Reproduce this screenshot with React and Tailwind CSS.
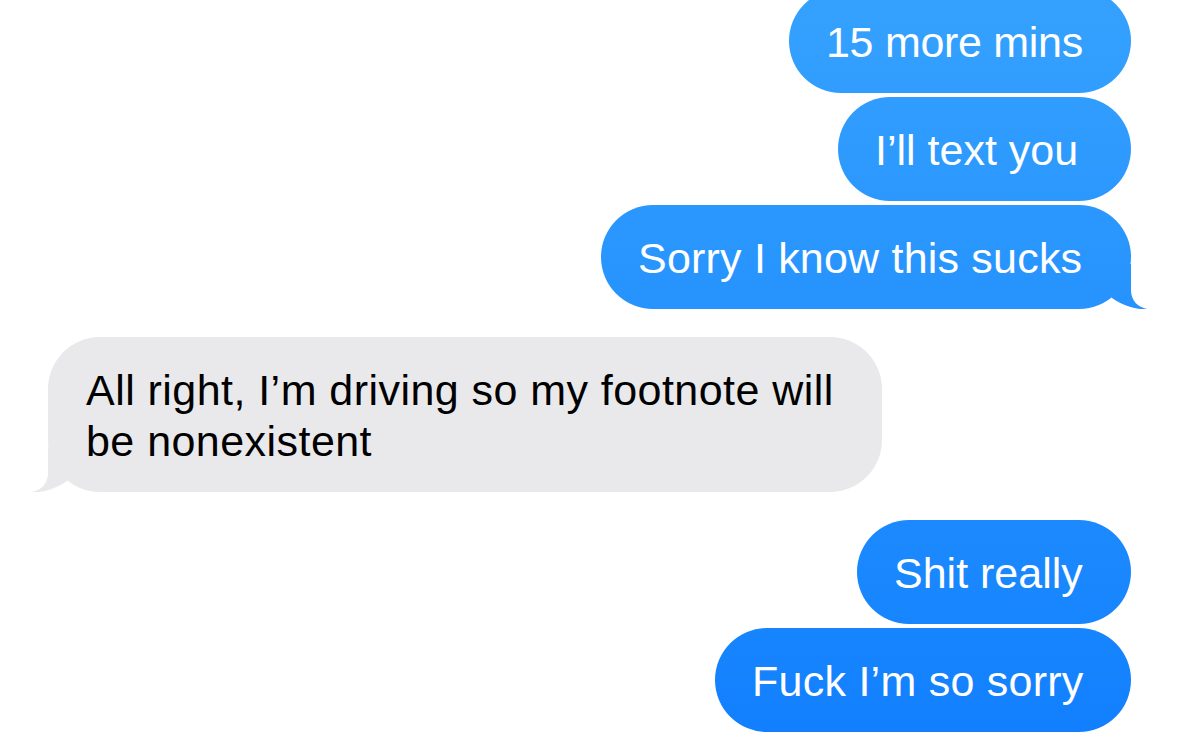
const sent = 'bg-[linear-gradient(180deg,#35a1fe_0%,#1280fe_100%)] bg-fixed text-white';

// tail sits with its top at page y 264, so the gradient is shifted to line up with the fixed one
function BlueTail() {
  return (
    <svg className="absolute bottom-0 right-[-16px]" width="50" height="45" viewBox="0 0 50 45">
      <defs>
        <linearGradient id="tailBlue" gradientUnits="userSpaceOnUse" x1="0" y1="-264" x2="0" y2="469">
          <stop offset="0" stopColor="#35a1fe" />
          <stop offset="1" stopColor="#1280fe" />
        </linearGradient>
      </defs>
      <path d="M0 0H34V26C34 37 41 43 50 45C40 46 26 42 15 34L0 0Z" fill="url(#tailBlue)" />
    </svg>
  );
}

function GrayTail() {
  return (
    <svg className="absolute bottom-0 left-[-16px]" width="50" height="45" viewBox="0 0 50 45">
      <path d="M50 0H16V26C16 37 9 43 0 45C10 46 24 42 35 34L50 0Z" fill="#e9e9eb" />
    </svg>
  );
}

function Sent({ text, width, tail, className = '' }) {
  return (
    <div
      className={`relative h-[104px] rounded-[52px] pl-[37px] pt-[28px] pb-[25px] whitespace-nowrap ${sent} ${className}`}
      style={{ width }}
    >
      {text}
      {tail && <BlueTail />}
    </div>
  );
}

export default function App() {
  return (
    <div
      className="w-[1179px] h-[733px] overflow-hidden bg-white px-[48px] text-[43px] leading-[51px]"
      style={{ fontFamily: '"Liberation Sans", Arial, sans-serif' }}
    >
      <div className="flex flex-col items-end gap-[4px] mt-[-11px]">
        <Sent text="15 more mins" width={342} className="tracking-[-0.3px]" />
        <Sent text="I’ll text you" width={293} />
        <Sent text="Sorry I know this sucks" width={530} tail className="tracking-[0.2px]" />
      </div>

      <div className="flex mt-[28px]">
        <div className="relative w-[834px] h-[155px] rounded-[52px] bg-[#e9e9eb] text-black pl-[38px] pt-[28px] pb-[25px] tracking-[0.45px]">
          All right, I’m driving so my footnote will
          <br />
          be nonexistent
          <GrayTail />
        </div>
      </div>

      <div className="flex flex-col items-end gap-[4px] mt-[28px]">
        <Sent text="Shit really" width={274} />
        <Sent text="Fuck I’m so sorry" width={416} className="tracking-[0.25px]" />
      </div>
    </div>
  );
}
